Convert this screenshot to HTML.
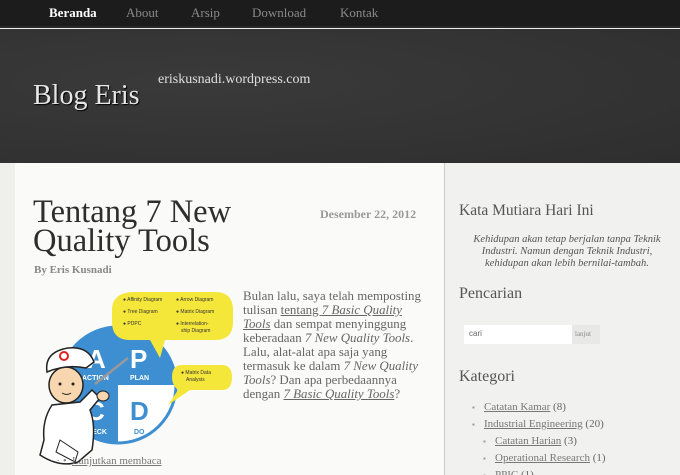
<!DOCTYPE html>
<html style="width:680px;height:475px;overflow:hidden"><head><meta charset="utf-8"><style>
*{margin:0;padding:0;box-sizing:border-box}
body{width:680px;height:475px;overflow:hidden;background:#efefec;font-family:"Liberation Serif",serif;position:relative}
.nav{position:absolute;left:0;top:0;width:680px;height:28px;background:#1c1c1c;border-bottom:2px solid #2a2a2a}
.nav span{position:absolute;top:5px;font-size:13px;color:#8a8a8a}
.hdr{position:absolute;left:0;top:29px;width:680px;height:134px;background:radial-gradient(ellipse at 30% 40%,#3a3a3a,#333 60%,#2e2e2e)}
.title{position:absolute;left:33px;top:80px;font-size:28px;color:#e6e6e6;text-shadow:1px 1px 1px #000}
.tag{position:absolute;left:158px;top:72px;font-size:14px;color:#e0e0e0}
.main{position:absolute;left:15px;top:163px;width:430px;height:312px;background:#fafaf8;border-right:1px solid #ccc}
.side{position:absolute;left:446px;top:163px;width:234px;height:312px;background:#f1f1ef}
h1{position:absolute;left:33px;top:198px;font-size:32.5px;line-height:29px;font-weight:normal;color:#2e2e2e}
.by{position:absolute;left:34px;top:264px;font-size:11px;color:#888;font-weight:bold}
.date{position:absolute;left:320px;top:207px;font-size:12px;color:#999;font-weight:bold}
.txt{position:absolute;left:243px;top:289px;width:182px;font-size:12.9px;line-height:14px;color:#666}
.txt u{color:#666}
.more{position:absolute;left:72px;top:455px;font-size:11px;color:#777;text-decoration:underline}
.dots{position:absolute;left:50px;top:455px;font-size:11px;color:#888}
.sh{position:absolute;left:459px;font-size:15.5px;color:#555}
.quote{position:absolute;left:460px;top:234px;width:214px;text-align:center;font-style:italic;font-size:10.5px;line-height:12px;color:#555}
.search{position:absolute;left:464px;top:325px;width:108px;height:19px;background:#fff;font-family:"Liberation Sans",sans-serif;font-size:8px;color:#666;padding:4px 5px}
.sbtn{position:absolute;left:572px;top:325px;width:28px;height:19px;background:#e8e8e6;font-size:7px;color:#888;padding:5px 3px}
ul{position:absolute;left:472px;top:399px;list-style:none;font-size:11px;line-height:17px;color:#666}
ul li:before{content:"▪";font-size:8px;color:#999;display:inline-block;width:12px}
ul u{color:#777}
</style></head><body>
<div class="nav">
<span style="left:49px;color:#fff;font-weight:bold">Beranda</span>
<span style="left:126px">About</span>
<span style="left:191px">Arsip</span>
<span style="left:252px">Download</span>
<span style="left:340px">Kontak</span>
</div>
<div class="hdr"></div>
<div class="title">Blog Eris</div>
<div class="tag">eriskusnadi.wordpress.com</div>
<div class="main"></div>
<div class="side"></div>
<h1>Tentang 7 New<br>Quality Tools</h1>
<div class="by">By Eris Kusnadi</div>
<div class="date">Desember 22, 2012</div>
<svg style="position:absolute;left:0;top:0" width="445" height="475">
<circle cx="118" cy="385" r="58" fill="#fff" stroke="#3d8fd1" stroke-width="3"/>
<path d="M118 385 L118 327 A58 58 0 0 0 60 385Z M118 385 L118 327 A58 58 0 0 1 176 385Z M118 385 L60 385 A58 58 0 0 0 118 443Z" fill="#3d8fd1"/>
<g font-family="Liberation Sans,sans-serif" font-weight="bold" fill="#fff">
<text x="87" y="368" font-size="26">A</text><text x="82" y="380" font-size="7">ACTION</text>
<text x="130" y="368" font-size="26">P</text><text x="130" y="380" font-size="7">PLAN</text>
<text x="86" y="420" font-size="26">C</text><text x="82" y="434" font-size="7">CHECK</text>
<text x="130" y="420" font-size="26" fill="#3d8fd1">D</text><text x="134" y="434" font-size="7" fill="#3d8fd1">DO</text>
</g>
<path d="M135 292 H215 Q233 292 233 310 V322 Q233 340 215 340 H165 L160 358 L150 340 H130 Q112 340 112 322 V310 Q112 292 135 292Z" fill="#f5e63a"/>
<path d="M182 365 H222 Q232 365 232 377 Q232 390 222 390 H190 L168 405 L178 390 Q172 385 172 377 Q172 365 182 365Z" fill="#f5e63a"/>
<g font-family="Liberation Sans,sans-serif" font-size="5" fill="#333">
<text x="123" y="301">● Affinity Diagram</text><text x="176" y="301">● Arrow Diagram</text>
<text x="123" y="313">● Tree Diagram</text><text x="176" y="313">● Matrix Diagram</text>
<text x="123" y="325">● PDPC</text><text x="176" y="325">● Interrelation-</text><text x="181" y="332">ship Diagram</text>
<text x="181" y="374">● Matrix Data</text><text x="186" y="381">Analysis</text>
</g>
<line x1="95" y1="384" x2="128" y2="358" stroke="#999" stroke-width="2.5"/>
<path d="M52 405 Q42 420 44 440 L40 455 Q60 468 78 462 L92 450 Q96 425 90 410 L100 398 L92 390 L80 402 Z" fill="#fff" stroke="#222" stroke-width="1.5"/>
<ellipse cx="66" cy="385" rx="17" ry="18" fill="#f7d6b0" stroke="#222" stroke-width="1.5"/>
<path d="M47 372 Q44 352 68 348 Q88 346 94 362 L86 368 Q66 364 47 372Z" fill="#fff" stroke="#222" stroke-width="1.5"/>
<circle cx="64" cy="356" r="4" fill="none" stroke="#d22" stroke-width="2"/>
<circle cx="60" cy="384" r="1.5" fill="#222"/><circle cx="73" cy="384" r="1.5" fill="#222"/>
<path d="M62 393 Q67 396 71 393" fill="none" stroke="#222"/>
<ellipse cx="103" cy="396" rx="6" ry="5" fill="#f7d6b0" stroke="#222"/>
<path d="M60 440 L78 452 L75 462 L56 452Z" fill="#fff" stroke="#222"/>
</svg>
<div class="txt">Bulan lalu, saya telah memposting tulisan <u>tentang <i>7 Basic Quality Tools</i></u> dan sempat menyinggung keberadaan <i>7 New Quality Tools</i>. Lalu, alat-alat apa saja yang termasuk ke dalam <i>7 New Quality Tools</i>? Dan apa perbedaannya dengan <u><i>7 Basic Quality Tools</i></u>?</div>
<div class="dots">· · •</div>
<div class="more">Lanjutkan membaca</div>
<div class="sh" style="top:202px">Kata Mutiara Hari Ini</div>
<div class="quote">Kehidupan akan tetap berjalan tanpa Teknik Industri. Namun dengan Teknik Industri, kehidupan akan lebih bernilai-tambah.</div>
<div class="sh" style="top:285px;font-size:16px">Pencarian</div>
<div class="search">cari</div>
<div class="sbtn">lanjut</div>
<div class="sh" style="top:368px;font-size:16px">Kategori</div>
<ul>
<li><u>Catatan Kamar</u> (8)</li>
<li><u>Industrial Engineering</u> (20)</li>
<li style="padding-left:11px"><u>Catatan Harian</u> (3)</li>
<li style="padding-left:11px"><u>Operational Research</u> (1)</li>
<li style="padding-left:11px"><u>PPIC</u> (1)</li>
</ul>
</body></html>
